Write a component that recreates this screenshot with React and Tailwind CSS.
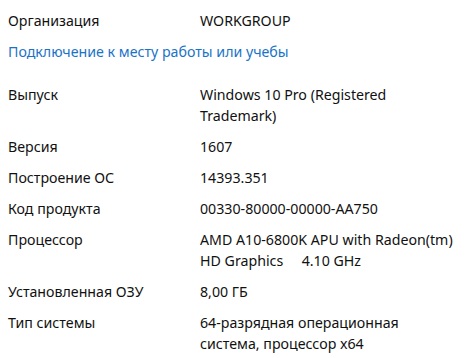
import React from "react";

const rows = [
  ["Выпуск", ["Windows 10 Pro (Registered", "Trademark)"]],
  ["Версия", ["1607"]],
  ["Построение ОС", ["14393.351"]],
  ["Код продукта", ["00330-80000-00000-AA750"]],
  ["Процессор", ["AMD A10-6800K APU with Radeon(tm)", "HD Graphics\u00a0\u00a0\u00a0\u00a0 4.10 GHz"]],
  ["Установленная ОЗУ", ["8,00 ГБ"]],
  ["Тип системы", ["64-разрядная операционная", "система, процессор x64"]],
];

function Row({ label, lines }) {
  return (
    <div className="flex">
      <div className="w-[192px] shrink-0">{label}</div>
      <div>
        {lines.map((l, i) => (
          <div key={i} className="whitespace-pre">{l}</div>
        ))}
      </div>
    </div>
  );
}

export default function App() {
  return (
    <div
      className="w-[466px] h-[358px] bg-white text-[#111] text-[14.2px] leading-[21px] pl-2 pt-[10px] overflow-hidden"
      style={{ fontFamily: '"Noto Sans", "DejaVu Sans", sans-serif' }}
    >
      <Row label="Организация" lines={["WORKGROUP"]} />
      <div className="mt-[10px] text-[#1a73c6]">Подключение к месту работы или учебы</div>
      <div className="mt-[22px] flex flex-col gap-[10px]">
        {rows.map(([l, v]) => (
          <Row key={l} label={l} lines={v} />
        ))}
      </div>
    </div>
  );
}
